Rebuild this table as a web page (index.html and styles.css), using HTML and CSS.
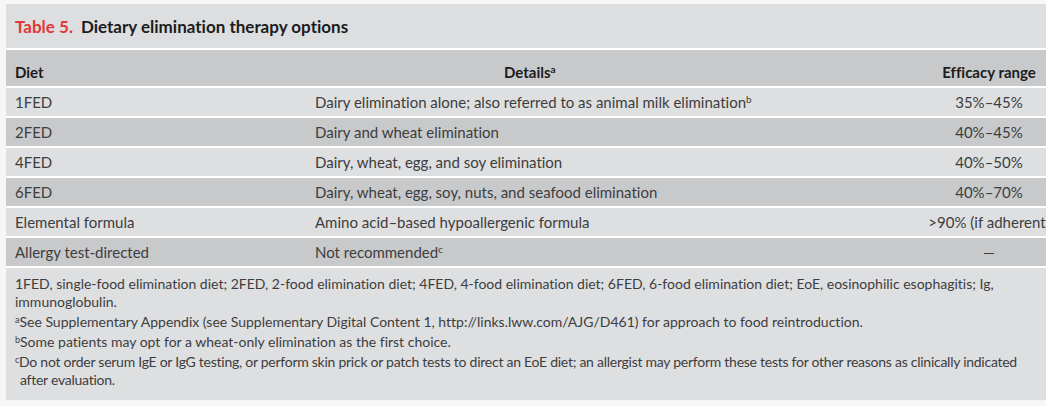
FILE: index.html
```html
<!DOCTYPE html>
<html>
<head>
<meta charset="utf-8">
<link rel="stylesheet" href="styles.css">
</head>
<body>
<div class="panel">
  <div class="title"><span class="tnum">Table 5.</span><span class="ttext">Dietary elimination therapy options</span></div>
  <div class="row head">
    <div class="c1">Diet</div>
    <div class="c2 hdetails">Details<sup>a</sup></div>
    <div class="c3">Efficacy range</div>
  </div>
  <div class="row light">
    <div class="c1">1FED</div>
    <div class="c2">Dairy elimination alone; also referred to as animal milk elimination<sup>b</sup></div>
    <div class="c3">35%–45%</div>
  </div>
  <div class="row dark">
    <div class="c1">2FED</div>
    <div class="c2">Dairy and wheat elimination</div>
    <div class="c3">40%–45%</div>
  </div>
  <div class="row light">
    <div class="c1">4FED</div>
    <div class="c2">Dairy, wheat, egg, and soy elimination</div>
    <div class="c3">40%–50%</div>
  </div>
  <div class="row dark">
    <div class="c1">6FED</div>
    <div class="c2">Dairy, wheat, egg, soy, nuts, and seafood elimination</div>
    <div class="c3">40%–70%</div>
  </div>
  <div class="row light">
    <div class="c1">Elemental formula</div>
    <div class="c2">Amino acid–based hypoallergenic formula</div>
    <div class="c3">&gt;90% (if adherent)</div>
  </div>
  <div class="row dark">
    <div class="c1">Allergy test-directed</div>
    <div class="c2">Not recommended<sup>c</sup></div>
    <div class="c3">—</div>
  </div>
  <div class="notes">
    <p>1FED, single-food elimination diet; 2FED, 2-food elimination diet; 4FED, 4-food elimination diet; 6FED, 6-food elimination diet; EoE, eosinophilic esophagitis; Ig, immunoglobulin.</p>
    <p><sup>a</sup>See Supplementary Appendix (see Supplementary Digital Content 1, http://links.lww.com/AJG/D461) for approach to food reintroduction.</p>
    <p><sup>b</sup>Some patients may opt for a wheat-only elimination as the first choice.</p>
    <p class="cond"><sup>c</sup>Do not order serum IgE or IgG testing, or perform skin prick or patch tests to direct an EoE diet; an allergist may perform these tests for other reasons as clinically indicated after evaluation.</p>
  </div>
</div>
</body>
</html>
```

FILE: styles.css
```css
html, body {
  margin: 0;
  padding: 0;
  background: #f6f6f6;
  overflow: hidden;
}
body {
  width: 1046px;
  height: 406px;
  font-family: Lato, "Liberation Sans", sans-serif;
  font-variant-ligatures: none;
  color: #3d3d3d;
}
.panel {
  margin: 4px 0 0 6px;
  width: 1080px;
  background: #ffffff;
  display: flex;
  flex-direction: column;
  gap: 2px;
}
.title {
  height: 44px;
  background: #dddee0;
  display: flex;
  align-items: center;
  padding-left: 9px;
  font-size: 17px;
  font-weight: bold;
  color: #1c1c1c;
}
.tnum {
  color: #e2393a;
  margin-right: 8px;
}
.row {
  display: grid;
  grid-template-columns: 300px 590px 186px;
  align-items: center;
  height: 28px;
  font-size: 15px;
  white-space: nowrap;
}
.row.head {
  height: 36px;
  align-items: end;
  padding-bottom: 5px;
  box-sizing: border-box;
  background: #c8c9cb;
  font-weight: bold;
  color: #1c1c1c;
}
.light { background: #dedfe1; }
.dark { background: #c8c9cb; }
.c1 { padding-left: 9px; }
.c2 { padding-left: 9px; }
.c3 { text-align: center; }
.hdetails { padding-left: 198px; }
sup {
  font-size: 10px;
  vertical-align: 5px;
  line-height: 0;
}
.notes {
  background: #dedfe1;
  padding: 7px 9px 9px 9px;
  font-size: 14px;
  line-height: 18px;
  color: #3d3d3d;
  width: 1040px;
  box-sizing: border-box;
}
.notes p {
  margin: 0 0 2px 0;
}
.notes sup {
  font-size: 9px;
  vertical-align: 4px;
}
.cond {
  padding-left: 5px;
  text-indent: -5px;
  letter-spacing: -0.26px;
}
```
